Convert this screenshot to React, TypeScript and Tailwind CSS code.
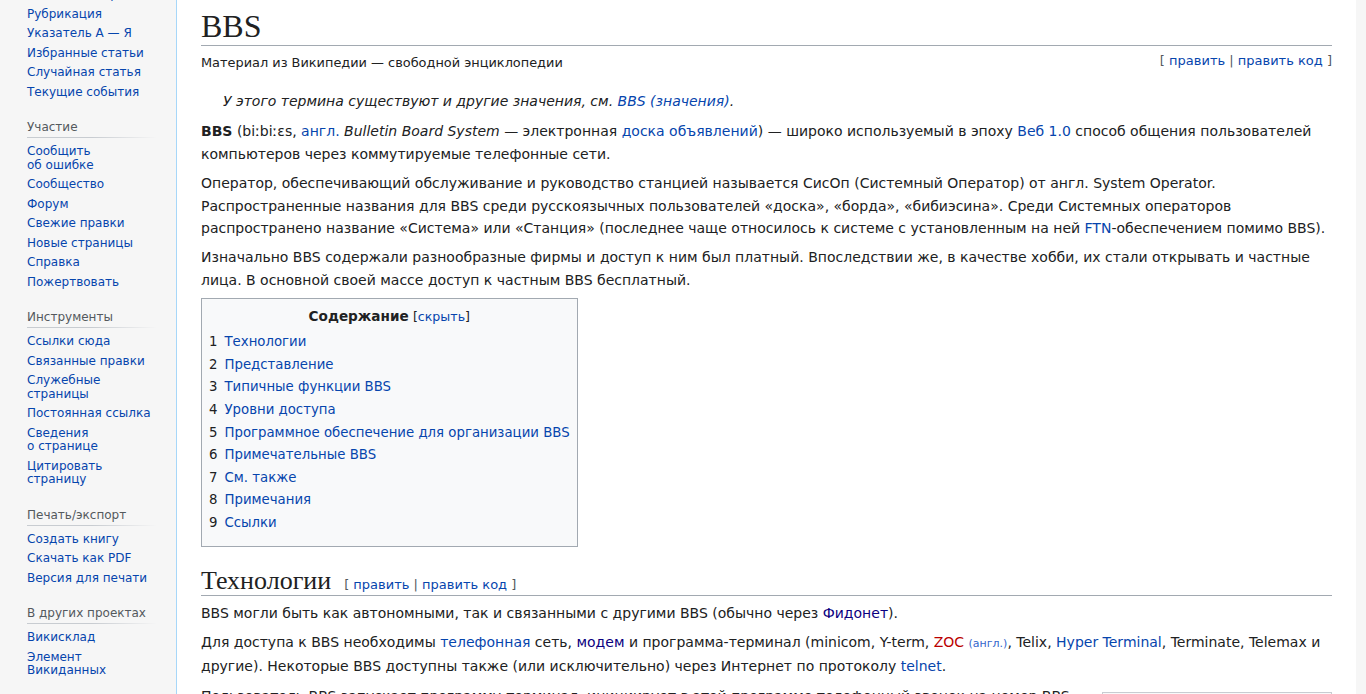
import React from 'react';

type Portal = { title?: string; items: string[] };

const portals: Portal[] = [
  {
    items: [
      'Заглавная страница',
      'Рубрикация',
      'Указатель А — Я',
      'Избранные статьи',
      'Случайная статья',
      'Текущие события',
    ],
  },
  {
    title: 'Участие',
    items: [
      'Сообщить об\u00a0ошибке',
      'Сообщество',
      'Форум',
      'Свежие правки',
      'Новые страницы',
      'Справка',
      'Пожертвовать',
    ],
  },
  {
    title: 'Инструменты',
    items: [
      'Ссылки сюда',
      'Связанные правки',
      'Служебные страницы',
      'Постоянная ссылка',
      'Сведения о\u00a0странице',
      'Цитировать страницу',
    ],
  },
  {
    title: 'Печать/экспорт',
    items: ['Создать книгу', 'Скачать как PDF', 'Версия для печати'],
  },
  {
    title: 'В других проектах',
    items: ['Викисклад', 'Элемент Викиданных'],
  },
];

const toc = [
  'Технологии',
  'Представление',
  'Типичные функции BBS',
  'Уровни доступа',
  'Программное обеспечение для организации BBS',
  'Примечательные BBS',
  'См. также',
  'Примечания',
  'Ссылки',
];

function A({ children, visited, red }: { children: React.ReactNode; visited?: boolean; red?: boolean }) {
  const color = red ? 'text-[#ba0000]' : visited ? 'text-[#0b0080]' : 'text-[#0645ad]';
  return <a href="#" className={`${color} no-underline`}>{children}</a>;
}

function EditLinks({ className = '' }: { className?: string }) {
  return (
    <span className={`text-[13px] text-[#54595d] whitespace-nowrap font-['DejaVu_Sans',sans-serif] ${className}`}>
      [ <A>править</A> | <A>править код</A> ]
    </span>
  );
}

function Sidebar() {
  return (
    <nav className="w-[176px] shrink-0 pl-[27px] text-[12px]">
      <div className="w-[130px] -mt-[15px]">
        {portals.map((portal, i) => (
          <div key={i} className={i > 0 ? 'mt-[17px]' : ''}>
            {portal.title && (
              <>
                <h3 className="text-[12px] leading-[16px] pb-[2px] text-[#54595d]">{portal.title}</h3>
                <div className="h-px bg-gradient-to-r from-[#c8ccd1] via-[#c8ccd1] to-transparent" />
              </>
            )}
            <ul className={portal.title ? 'pt-[4px]' : ''}>
              {portal.items.map((item, j) => (
                <li key={j} className="py-[3px] leading-[13.5px]">
                  <a href="#" className="text-[#0645ad]">{item}</a>
                </li>
              ))}
            </ul>
          </div>
        ))}
      </div>
    </nav>
  );
}

function Toc() {
  return (
    <div className="w-fit border border-[#a2a9b1] bg-[#f8f9fa] p-[7px] text-[13.3px]">
      <div className="text-center leading-[20px]">
        <b className="font-bold text-[13.6px]">Содержание</b>{' '}
        <span className="text-[12.6px]">[<A>скрыть</A>]</span>
      </div>
      <ul className="my-[4px]">
        {toc.map((t, i) => (
          <li key={t} className="leading-[22.6px] whitespace-nowrap">
            <span className="pr-[7px] text-[#202122]">{i + 1}</span>
            <A>{t}</A>
          </li>
        ))}
      </ul>
    </div>
  );
}

export default function App() {
  return (
    <div className="min-h-screen bg-[#f6f6f6] flex font-['DejaVu_Sans',sans-serif] text-[#202122] overflow-hidden">
      <Sidebar />
      <main className="flex-1 mr-[10px] bg-white border-l border-[#a7d7f9] px-[24px] pt-[7px] pb-[24px]">
        <h1 className="font-['Liberation_Serif',serif] text-[32px] leading-[38px] border-b border-[#a2a9b1]">
          BBS
        </h1>
        <div className="flex justify-between items-start mt-[8px]">
          <div className="text-[12.9px] leading-[18px] text-[#202122]">Материал из Википедии — свободной энциклопедии</div>
          <EditLinks className="leading-[14px]" />
        </div>

        <div className="mt-[18px] pb-[1px] pl-[22px] italic text-[14px] leading-[22.4px]">
          У этого термина существуют и другие значения, см. <A>BBS (значения)</A>.
        </div>

        <div className="text-[14px] leading-[22.4px]">
          <p className="my-[7px]">
            <b>BBS</b> (biːbiːɛs, <A>англ.</A> <i>Bulletin Board System</i> — электронная <A>доска объявлений</A>) —
            широко используемый в эпоху <A>Веб 1.0</A> способ общения пользователей компьютеров через коммутируемые
            телефонные сети.
          </p>
          <p className="my-[7px]">
            Оператор, обеспечивающий обслуживание и руководство станцией называется СисОп (Системный Оператор) от англ.
            System Operator. Распространенные названия для BBS среди русскоязычных пользователей «доска», «борда»,
            «бибиэсина». Среди Системных операторов распространено название «Система» или «Станция» (последнее чаще
            относилось к системе с установленным на ней <A>FTN</A>-обеспечением помимо BBS).
          </p>
          <p className="my-[7px]">
            Изначально BBS содержали разнообразные фирмы и доступ к ним был платный. Впоследствии же, в качестве хобби,
            их стали открывать и частные лица. В основной своей массе доступ к частным BBS бесплатный.
          </p>

          <Toc />

          <h2 className="mt-[21px] mb-[5px] border-b border-[#a2a9b1] leading-[28px] h-[28px] whitespace-nowrap">
            <span className="font-['Liberation_Serif',serif] text-[26px] leading-none">Технологии</span>
            <EditLinks className="ml-[13px] leading-none" />
          </h2>
          <p className="mt-[6px] mb-[7px]">
            BBS могли быть как автономными, так и связанными с другими BBS (обычно через <A visited>Фидонет</A>).
          </p>
          <p className="my-[7px]">
            Для доступа к BBS необходимы <A>телефонная</A> сеть, <A visited>модем</A> и программа-терминал (minicom,
            Y-term, <A red>ZOC</A> <span className="text-[11px] text-[#3366cc]">(англ.)</span>, Telix,{' '}
            <A>Hyper Terminal</A>, Terminate, Telemax и другие). Некоторые BBS доступны также (или исключительно) через
            Интернет по протоколу <A>telnet</A>.
          </p>
          <div className="float-right w-[230px] ml-[20px] mt-[7px] mb-[18px] border border-[#c8ccd1] bg-[#f8f9fa] p-[3px]">
            <div className="h-[160px] bg-[#000080] border border-[#c8ccd1]" />
            <div className="text-[12px] leading-[18px] p-[3px]">Пример интерфейса BBS</div>
          </div>
          <p className="my-[7px]">
            Пользователь BBS запускает программу-терминал, инициирует в этой программе телефонный звонок на номер BBS,
            и после установления соединения модемов получает доступ к ресурсам станции.
          </p>
        </div>
      </main>
    </div>
  );
}
